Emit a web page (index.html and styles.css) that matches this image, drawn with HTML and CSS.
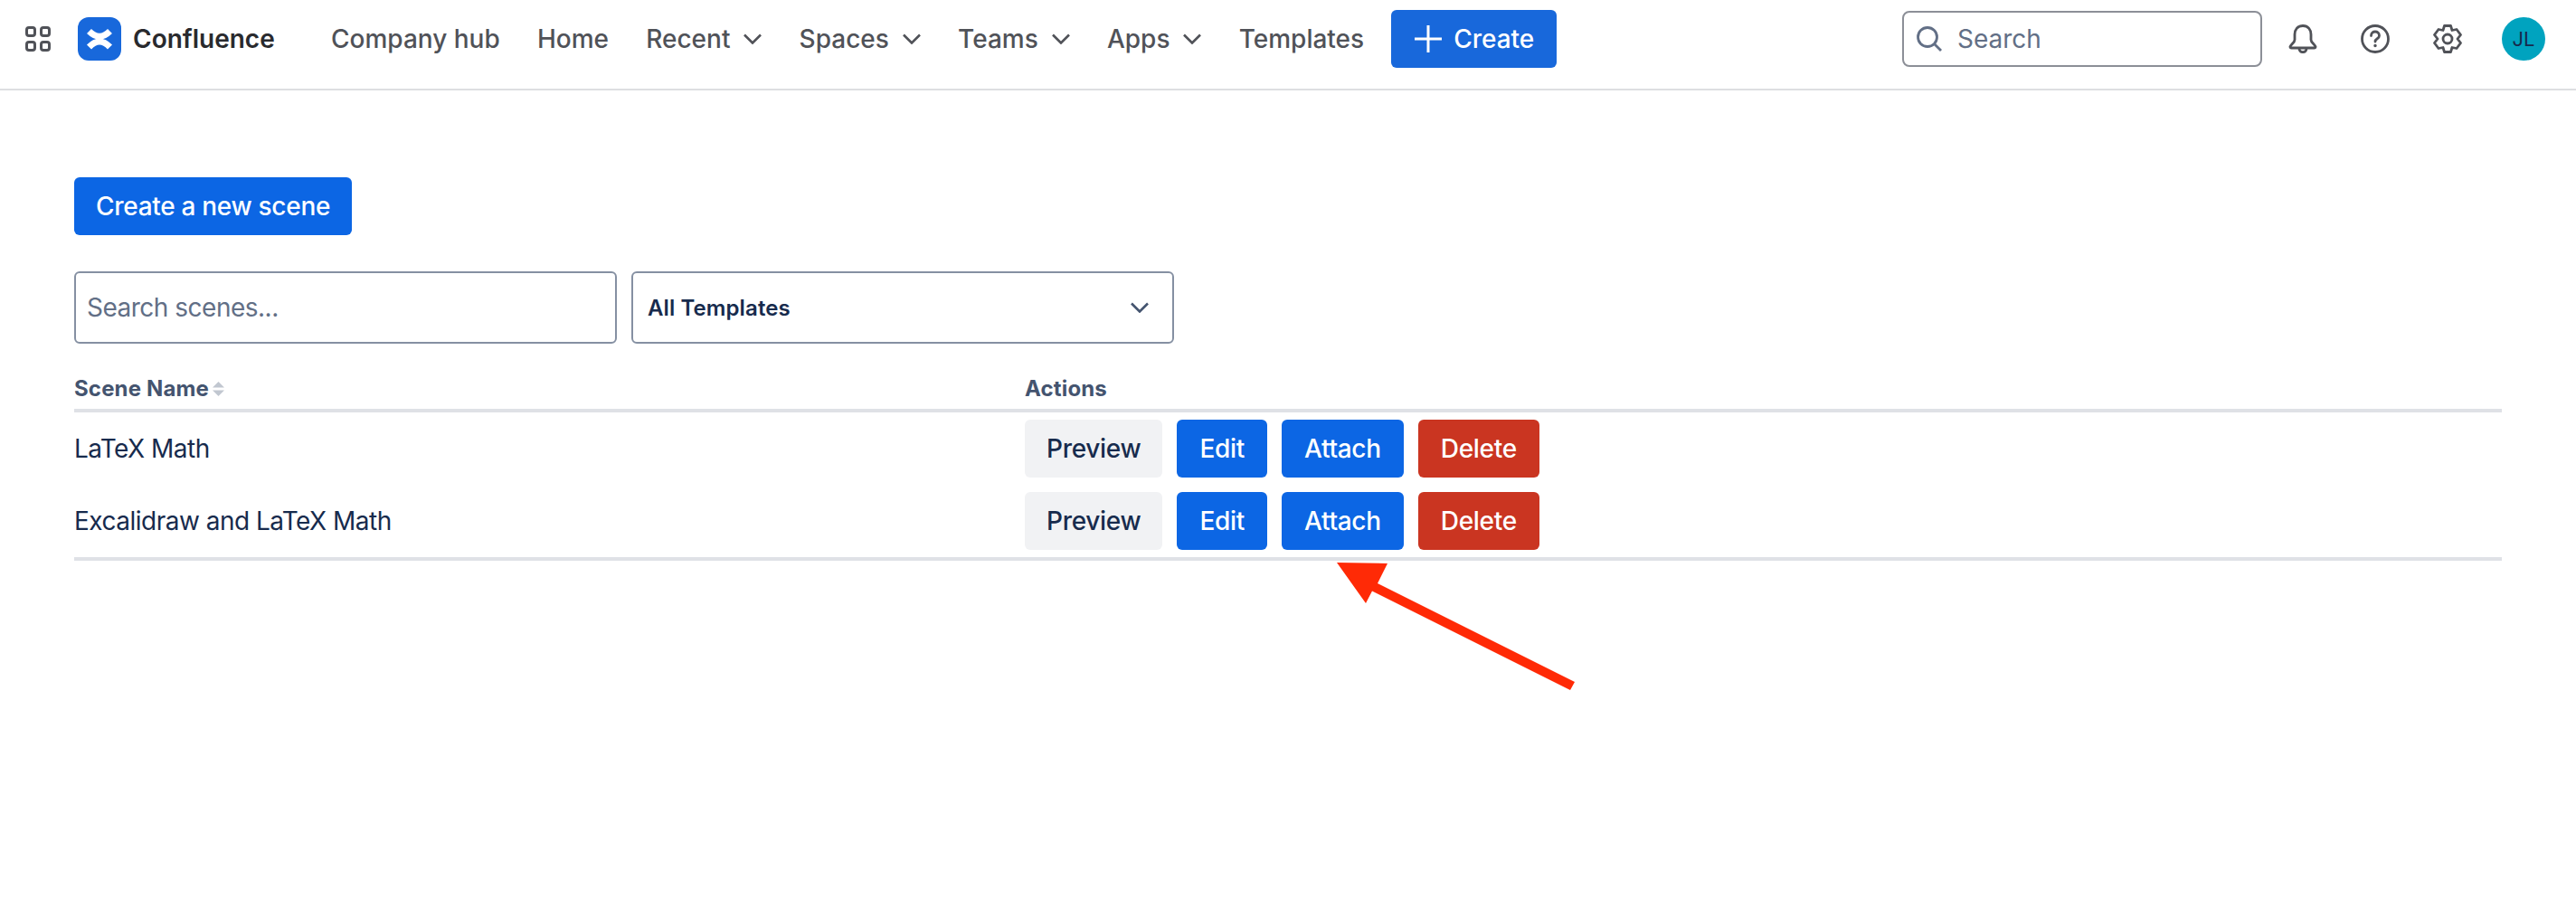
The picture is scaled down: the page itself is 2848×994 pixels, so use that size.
FILE: index.html
```html
<!DOCTYPE html>
<html lang="en">
<head>
<meta charset="utf-8">
<title>Confluence</title>
<link rel="stylesheet" href="styles.css">
</head>
<body>
<header class="topbar">
  <svg class="apps" viewBox="0 0 28 28" fill="none" stroke="#505258" stroke-width="3"><rect x="1.5" y="1.5" width="9" height="9" rx="2.5"/><rect x="17.5" y="1.5" width="9" height="9" rx="2.5"/><rect x="1.5" y="17.5" width="9" height="9" rx="2.5"/><rect x="17.5" y="17.5" width="9" height="9" rx="2.5"/></svg>
  <svg class="logo" viewBox="0 0 48 48"><rect width="48" height="48" rx="12" fill="#1868db"/><path d="M12.500 15.500Q24 27 35.500 15.500M12.500 33Q24 21 35.500 33" fill="none" stroke="#fff" stroke-width="7"/></svg>
  <span class="brand">Confluence</span>
  <nav class="nav">
    <a class="nav-item">Company hub</a>
    <a class="nav-item">Home</a>
    <a class="nav-item">Recent<svg class="chev" viewBox="0 0 20 12"><path d="M1 1.500L10 10.500L19 1.500"/></svg></a>
    <a class="nav-item">Spaces<svg class="chev" viewBox="0 0 20 12"><path d="M1 1.500L10 10.500L19 1.500"/></svg></a>
    <a class="nav-item">Teams<svg class="chev" viewBox="0 0 20 12"><path d="M1 1.500L10 10.500L19 1.500"/></svg></a>
    <a class="nav-item">Apps<svg class="chev" viewBox="0 0 20 12"><path d="M1 1.500L10 10.500L19 1.500"/></svg></a>
    <a class="nav-item">Templates</a>
  </nav>
  <button class="create"><svg class="plus" viewBox="0 0 30 30"><path d="M15 0V30M0 15H30"/></svg>Create</button>
  <div class="global-search">
    <svg class="search-icon" viewBox="0 0 28 28" fill="none" stroke="#626f86" stroke-width="2.800"><circle cx="12" cy="12" r="10.500"/><path d="M19.500 19.500L27 27"/></svg>
    <span>Search</span>
  </div>
  <svg class="tool" viewBox="0 0 32 32" fill="none" stroke="#505258" stroke-width="2.800" stroke-linejoin="round"><path d="M16 1.500C10 1.500 7 6 7 11V17C7 20 3 22 2 24.500C1.800 25.500 2.500 26 3.500 26H28.500C29.500 26 30.200 25.500 30 24.500C29 22 25 20 25 17V11C25 6 22 1.500 16 1.500Z"/><path d="M12 26.500C12 32 20 32 20 26.500"/></svg>
  <svg class="tool" viewBox="0 0 32 32" fill="none" stroke="#505258" stroke-width="2.800" stroke-linecap="round"><circle cx="16" cy="16" r="14.500"/><path d="M11.500 12.500C11.500 6.500 20.500 6.500 20.500 12.500C20.500 16 16 15.500 16 19"/><circle cx="16" cy="23.500" r="1" fill="#505258" stroke-width="1.500"/></svg>
  <svg class="tool" viewBox="0 0 32 32" fill="none" stroke="#505258" stroke-width="2.800" stroke-linejoin="round"><circle cx="16" cy="16" r="5"/><path d="M12.500 1.500H19.500L21 6.500L26 5.500L30.500 11.500L27 16L30.500 20.500L26 26.500L21 25.500L19.500 30.500H12.500L11 25.500L6 26.500L1.500 20.500L5 16L1.500 11.500L6 5.500L11 6.500Z"/></svg>
  <div class="avatar">JL</div>
</header>

<main class="page">
  <button class="btn btn-primary btn-new">Create a new scene</button>
  <div class="filters">
    <div class="field field-search">Search scenes...</div>
    <div class="field field-select">All Templates<svg class="select-chev" viewBox="0 0 20 12"><path d="M1 1.500L10 10.500L19 1.500"/></svg></div>
  </div>
  <table class="scenes">
    <thead>
      <tr>
        <th class="col-name"><span class="th-label">Scene Name<svg class="sort" viewBox="0 0 13 16"><path class="sort-up" d="M6.500 0L13 6.500H0Z"/><path class="sort-down" d="M6.500 16L13 9.500H0Z"/></svg></span></th>
        <th>Actions</th>
      </tr>
    </thead>
    <tbody>
      <tr>
        <td>LaTeX Math</td>
        <td><div class="actions"><button class="btn btn-muted">Preview</button><button class="btn btn-primary btn-edit">Edit</button><button class="btn btn-primary btn-wide">Attach</button><button class="btn btn-danger btn-wide">Delete</button></div></td>
      </tr>
      <tr>
        <td>Excalidraw and LaTeX Math</td>
        <td><div class="actions"><button class="btn btn-muted">Preview</button><button class="btn btn-primary btn-edit">Edit</button><button class="btn btn-primary btn-wide">Attach</button><button class="btn btn-danger btn-wide">Delete</button></div></td>
      </tr>
    </tbody>
  </table>
</main>
<svg class="arrow" viewBox="0 0 280 160"><polygon points="8,12 64,13 53,35 271,144 266,153 47,43.500 40,57" fill="#ff2a06"/></svg>
</body>
</html>
```

FILE: styles.css
```css
html, body { margin: 0; padding: 0; background: #fff; }
body { position: relative; width: 2848px; height: 994px; overflow: hidden; font-family: "Inter", "Liberation Sans", sans-serif; color: #172b4d; }

.topbar { display: flex; align-items: center; height: 86px; padding: 0 34px 12px 28px; border-bottom: 2px solid #dddee1; font-family: "Inter", "Liberation Sans", sans-serif; }
.apps { width: 28px; height: 28px; flex: none; }
.logo { width: 48px; height: 48px; flex: none; margin-left: 30px; }
.brand { margin-left: 13px; font-size: 28px; font-weight: 600; color: #292a2e; width: 157px; white-space: nowrap; }
.nav { display: flex; align-items: center; gap: 41.2px; margin-left: 62px; }
.nav-item { display: flex; align-items: center; font-size: 28px; font-weight: 500; color: #505258; white-space: nowrap; }
.chev { width: 20px; height: 12px; margin-left: 15px; fill: none; stroke: #505258; stroke-width: 2.6; }
.create { display: flex; align-items: center; height: 64px; margin-left: 30px; padding: 0 25px 0 26px; border: 0; border-radius: 6px; background: #1868db; color: #fff; font: 500 28px "Inter", "Liberation Sans", sans-serif; }
.plus { width: 30px; height: 30px; margin-right: 13px; fill: none; stroke: #fff; stroke-width: 3; }
.global-search { display: flex; align-items: center; box-sizing: border-box; width: 398px; height: 62px; margin-left: auto; margin-right: 29px; padding-left: 14px; border: 2px solid #8c8f97; border-radius: 8px; font-size: 28px; color: #626f86; }
.search-icon { width: 28px; height: 28px; margin-right: 17px; }
.tool { width: 32px; height: 32px; margin-right: 48px; flex: none; }
.avatar { display: flex; align-items: center; justify-content: center; width: 48px; height: 48px; margin-left: -4px; border-radius: 50%; background: #00a3bf; color: #172b4d; font-size: 22px; }

.page { padding: 96px 82px 0; }
.btn { height: 64px; padding: 0 24px; border: 0; border-radius: 6px; font: 500 28px "Inter", "Liberation Sans", sans-serif; letter-spacing: -0.3px; white-space: nowrap; }
.btn-primary { background: #0c66e4; color: #fff; }
.btn-muted { background: #f1f2f4; color: #172b4d; }
.btn-danger { background: #ca3521; color: #fff; }
.btn-new { display: block; }
.btn-edit { padding: 0 25px; }
.btn-wide { padding: 0 25px; }

.filters { display: flex; gap: 16px; margin-top: 40px; }
.field { box-sizing: border-box; display: flex; align-items: center; width: 600px; height: 80px; border: 2px solid #8590a2; border-radius: 6px; }
.field-search { padding-left: 12px; font-size: 28px; letter-spacing: -0.5px; color: #626f86; }
.field-select { justify-content: space-between; padding: 0 26px 0 16px; font-size: 24px; font-weight: 600; letter-spacing: 0.1px; color: #172b4d; }
.select-chev { width: 20px; height: 12px; fill: none; stroke: #44546f; stroke-width: 2.6; }

.scenes { width: 2684px; border-collapse: separate; border-spacing: 0; table-layout: fixed; }
.scenes th { box-sizing: border-box; height: 76px; padding: 0 0 8px; text-align: left; vertical-align: bottom; border-bottom: 4px solid #dfe1e6; font-size: 24px; font-weight: 700; letter-spacing: 0.15px; color: #44546f; }
.scenes .col-name { width: 1051px; }
.scenes td { height: 80px; padding: 0; font-size: 28px; letter-spacing: -0.5px; color: #172b4d; }
.scenes tbody tr:last-child td { border-bottom: 4px solid #dfe1e6; }
.th-label { display: inline-flex; align-items: center; }
.sort { width: 13px; height: 16px; margin-left: 4px; }
.sort-up, .sort-down { fill: #c1c7d0; }
.actions { display: flex; gap: 16px; }

.arrow { position: absolute; left: 1470px; top: 610px; width: 280px; height: 160px; }
```
